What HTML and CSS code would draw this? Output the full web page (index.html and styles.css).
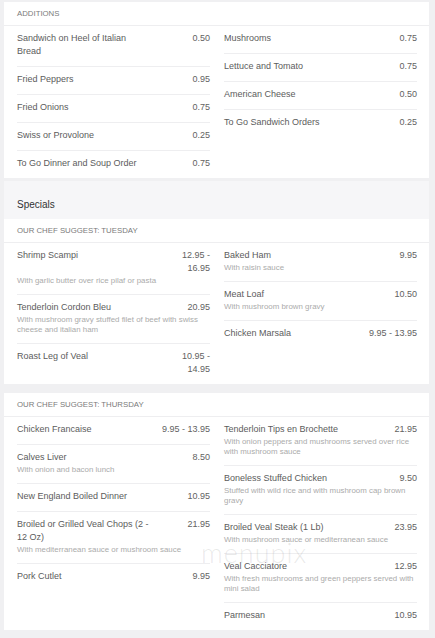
FILE: index.html
```html
<!DOCTYPE html>
<html lang="en">
<head>
<meta charset="utf-8">
<title>Menu</title>
<link rel="stylesheet" href="styles.css">
</head>
<body>
<div class="page">
  <section class="card">
    <div class="card-head">ADDITIONS</div>
    <div class="cols">
      <ul class="col">
        <li class="item"><div class="item-top"><span class="name">Sandwich on Heel of Italian Bread</span><span class="price">0.50</span></div></li>
        <li class="item"><div class="item-top"><span class="name">Fried Peppers</span><span class="price">0.95</span></div></li>
        <li class="item"><div class="item-top"><span class="name">Fried Onions</span><span class="price">0.75</span></div></li>
        <li class="item"><div class="item-top"><span class="name">Swiss or Provolone</span><span class="price">0.25</span></div></li>
        <li class="item"><div class="item-top"><span class="name">To Go Dinner and Soup Order</span><span class="price">0.75</span></div></li>
      </ul>
      <ul class="col">
        <li class="item"><div class="item-top"><span class="name">Mushrooms</span><span class="price">0.75</span></div></li>
        <li class="item"><div class="item-top"><span class="name">Lettuce and Tomato</span><span class="price">0.75</span></div></li>
        <li class="item"><div class="item-top"><span class="name">American Cheese</span><span class="price">0.50</span></div></li>
        <li class="item"><div class="item-top"><span class="name">To Go Sandwich Orders</span><span class="price">0.25</span></div></li>
      </ul>
    </div>
  </section>

  <h2 class="section-title">Specials</h2>

  <section class="card">
    <div class="card-head">OUR CHEF SUGGEST: TUESDAY</div>
    <div class="cols">
      <ul class="col">
        <li class="item"><div class="item-top"><span class="name">Shrimp Scampi</span><span class="price">12.95 - 16.95</span></div><p class="desc">With garlic butter over rice pilaf or pasta</p></li>
        <li class="item"><div class="item-top"><span class="name">Tenderloin Cordon Bleu</span><span class="price">20.95</span></div><p class="desc">With mushroom gravy stuffed filet of beef with swiss cheese and italian ham</p></li>
        <li class="item"><div class="item-top"><span class="name">Roast Leg of Veal</span><span class="price">10.95 - 14.95</span></div></li>
      </ul>
      <ul class="col">
        <li class="item"><div class="item-top"><span class="name">Baked Ham</span><span class="price">9.95</span></div><p class="desc">With raisin sauce</p></li>
        <li class="item"><div class="item-top"><span class="name">Meat Loaf</span><span class="price">10.50</span></div><p class="desc">With mushroom brown gravy</p></li>
        <li class="item"><div class="item-top"><span class="name">Chicken Marsala</span><span class="price">9.95 - 13.95</span></div></li>
      </ul>
    </div>
  </section>

  <section class="card card-spaced">
    <div class="card-head">OUR CHEF SUGGEST: THURSDAY</div>
    <div class="cols">
      <ul class="col">
        <li class="item"><div class="item-top"><span class="name">Chicken Francaise</span><span class="price">9.95 - 13.95</span></div></li>
        <li class="item"><div class="item-top"><span class="name">Calves Liver</span><span class="price">8.50</span></div><p class="desc">With onion and bacon lunch</p></li>
        <li class="item"><div class="item-top"><span class="name">New England Boiled Dinner</span><span class="price">10.95</span></div></li>
        <li class="item"><div class="item-top"><span class="name">Broiled or Grilled Veal Chops (2 - 12 Oz)</span><span class="price">21.95</span></div><p class="desc">With mediterranean sauce or mushroom sauce</p></li>
        <li class="item"><div class="item-top"><span class="name">Pork Cutlet</span><span class="price">9.95</span></div></li>
      </ul>
      <ul class="col">
        <li class="item"><div class="item-top"><span class="name">Tenderloin Tips en Brochette</span><span class="price">21.95</span></div><p class="desc">With onion peppers and mushrooms served over rice with mushroom sauce</p></li>
        <li class="item"><div class="item-top"><span class="name">Boneless Stuffed Chicken</span><span class="price">9.50</span></div><p class="desc">Stuffed with wild rice and with mushroom cap brown gravy</p></li>
        <li class="item"><div class="item-top"><span class="name">Broiled Veal Steak (1 Lb)</span><span class="price">23.95</span></div><p class="desc">With mushroom sauce or mediterranean sauce</p></li>
        <li class="item"><div class="item-top"><span class="name">Veal Cacciatore</span><span class="price">12.95</span></div><p class="desc">With fresh mushrooms and green peppers served with mini salad</p></li>
        <li class="item"><div class="item-top"><span class="name">Parmesan</span><span class="price">10.95</span></div></li>
      </ul>
    </div>
  </section>

  <div class="watermark" aria-hidden="true">menupix</div>
</div>
</body>
</html>
```

FILE: styles.css
```css
* {
  box-sizing: border-box;
}

html, body {
  margin: 0;
  padding: 0;
  background: #f0f0f2;
}

body {
  font-family: "Liberation Sans", Arial, sans-serif;
  color: #5a5a5a;
}

.page {
  position: relative;
  padding: 2px 6px 6px 4px;
}

.card {
  background: #ffffff;
}

.card-spaced {
  margin-top: 9px;
}

.card-head {
  height: 24px;
  padding: 0 13px;
  line-height: 23px;
  font-size: 7.8px;
  color: #7a7a7a;
  border-bottom: 1px solid #eeeef0;
  white-space: nowrap;
}

.cols {
  display: grid;
  grid-template-columns: 1fr 1fr;
  column-gap: 14px;
  padding: 0 12px 0 13px;
}

.col {
  list-style: none;
  margin: 0;
  padding: 0;
}

.item {
  padding: 6px 0 8px;
  border-bottom: 1px solid #eeeef0;
}

.item:last-child {
  border-bottom: none;
}

.item-top {
  display: flex;
  gap: 8px;
  font-size: 9px;
  line-height: 13px;
  color: #5c5c5c;
}

.name {
  flex: 1 1 auto;
  min-width: 0;
}

.price {
  flex: 0 0 50px;
  text-align: right;
  color: #626262;
}

.desc {
  margin: 1px 0 0;
  font-size: 7.9px;
  line-height: 10px;
  color: #ababab;
}

.section-title {
  margin: 3px 0 0;
  padding: 17px 13px 8px;
  font-size: 10px;
  line-height: 13px;
  font-weight: normal;
  color: #333333;
  background: #f6f6f8;
}

.watermark {
  position: absolute;
  left: 201px;
  top: 538px;
  font-family: Lato, "Liberation Sans", sans-serif;
  font-weight: 300;
  font-size: 27px;
  line-height: 30px;
  letter-spacing: 1px;
  color: rgba(120, 120, 120, 0.16);
  pointer-events: none;
}
```
